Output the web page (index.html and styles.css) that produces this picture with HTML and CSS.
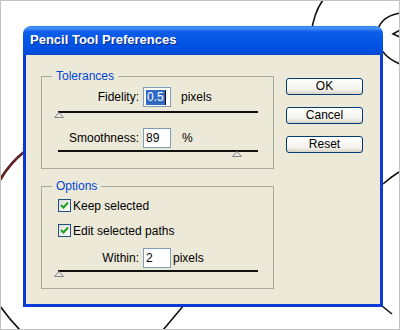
FILE: index.html
```html
<!DOCTYPE html>
<html>
  <head>
    <title>Pencil Tool Preferences</title>
    <link rel="stylesheet" href="styles.css">
  </head>
  <body>
    <div class="desktop">
      <svg class="doodles" width="398" height="328" viewBox="1 1 398 328">
        <path d="M311 34 Q314 12 323 0" />
        <path d="M400 13 Q378 17 377 35 Q378 55 400 64" />
        <path d="M400 30 L393 34 L400 37" />
        <path d="M383 184 Q391 177 399 172" />
        <path d="M382 306 L392 314" />
        <path d="M184 305 Q174 317 163 330" />
        <path d="M0 306 Q10 320 20 330" />
        <path class="red-edge" d="M0 180 Q10 163 24 152" />
        <path class="red" d="M0 180 Q10 163 24 152" />
      </svg>

      <div class="window">
        <div class="titlebar">Pencil Tool Preferences</div>
        <div class="client">
          <div class="groups">
            <fieldset class="group tolerances">
              <legend>Tolerances</legend>
              <div class="row first">
                <span class="label">Fidelity:</span>
                <span class="field"><span class="sel">0.5</span><span class="caret"></span></span>
                <span class="unit wide">pixels</span>
              </div>
              <div class="slider gap4">
                <span class="thumb" style="left: 0%"><svg width="10" height="6"><path d="M5 0.5 L9.5 5.5 L0.5 5.5 Z" /></svg></span>
              </div>
              <div class="row second">
                <span class="label">Smoothness:</span>
                <span class="field">89</span>
                <span class="unit wider">%</span>
              </div>
              <div class="slider gap2">
                <span class="thumb" style="left: 89%"><svg width="10" height="6"><path d="M5 0.5 L9.5 5.5 L0.5 5.5 Z" /></svg></span>
              </div>
            </fieldset>

            <fieldset class="group options">
              <legend>Options</legend>
              <div class="check first-check">
                <span class="box"><svg width="11" height="11"><path d="M2 5 L4.5 7.5 L9 2.5" /></svg></span>
                Keep selected
              </div>
              <div class="check">
                <span class="box"><svg width="11" height="11"><path d="M2 5 L4.5 7.5 L9 2.5" /></svg></span>
                Edit selected paths
              </div>
              <div class="row within">
                <span class="label">Within:</span>
                <span class="field">2</span>
                <span class="unit">pixels</span>
              </div>
              <div class="slider gap2">
                <span class="thumb" style="left: 0%"><svg width="10" height="6"><path d="M5 0.5 L9.5 5.5 L0.5 5.5 Z" /></svg></span>
              </div>
            </fieldset>
          </div>

          <div class="buttons">
            <button>OK</button>
            <button>Cancel</button>
            <button>Reset</button>
          </div>
        </div>
      </div>
    </div>
  </body>
</html>
```

FILE: styles.css
```css
body {
  margin: 0;
  font-family: "Liberation Sans", Arial, sans-serif;
  font-size: 12px;
  color: #000;
}
.desktop {
  position: relative;
  width: 400px;
  height: 330px;
  box-sizing: border-box;
  border: 1px solid #c3c3c3;
  background: #fff;
  overflow: hidden;
}
.doodles {
  position: absolute;
  left: 0;
  top: 0;
}
.doodles path {
  fill: none;
  stroke: #111;
  stroke-width: 1.6;
}
.doodles .red-edge {
  stroke: #222;
  stroke-width: 2.6;
}
.doodles .red {
  stroke: #d01010;
  stroke-width: 1;
}

/* the dialog */
.window {
  position: absolute;
  left: 22px;
  top: 25px;
  width: 360px;
  height: 281px;
  display: flex;
  flex-direction: column;
}
.titlebar {
  height: 29px;
  box-sizing: border-box;
  padding: 6px 0 0 7px;
  border-radius: 8px 8px 0 0;
  background: linear-gradient(#2b78f2 0%, #4a94fb 7%, #0d5de8 20%, #0355e6 55%, #0050e0 85%, #0a47cf 100%);
  color: #fff;
  font-size: 13px;
  font-weight: bold;
  line-height: 16px;
  text-shadow: 1px 1px 0 #0b2a8c;
}
.client {
  flex: 1;
  display: flex;
  align-items: flex-start;
  padding: 14px 0 0 15px;
  background: #ece9d8;
  border: 3px solid #0b3ad8;
  border-top: none;
}

/* group boxes */
.groups {
  width: 233px;
}
.group {
  margin: 0;
  padding: 0 0 16px 0;
  border: 1px solid #aaa89c;
  min-width: 0;
}
.group legend {
  margin-left: 10px;
  padding: 0 4px;
  line-height: 14px;
  color: #0046d5;
}
.options {
  margin-top: 10px;
}

.row {
  display: flex;
  align-items: center;
  height: 20px;
}
.row.first {
  margin-top: 4px;
}
.row.second {
  margin-top: 15px;
}
.row.within {
  margin-top: 11px;
}
.label {
  width: 97px;
  margin-right: 4px;
  text-align: right;
}
.field {
  display: flex;
  align-items: center;
  width: 28px;
  height: 20px;
  box-sizing: border-box;
  padding-left: 2px;
  border: 1px solid #7f9db9;
  background: #fff;
}
.sel {
  background: #316ac5;
  color: #fff;
  line-height: 15px;
  padding: 0 1px;
}
.caret {
  width: 1px;
  height: 15px;
  background: #000;
}
.unit {
  margin-left: 2px;
}
.unit.wide {
  margin-left: 10px;
}
.unit.wider {
  margin-left: 11px;
}

/* sliders */
.slider {
  position: relative;
  height: 2px;
  margin: 0 15px 0 16px;
  background: #111;
}
.slider.gap4 {
  margin-top: 4px;
}
.slider.gap2 {
  margin-top: 2px;
}
.thumb {
  position: absolute;
  top: 1px;
  margin-left: -4px;
  width: 10px;
  height: 6px;
}
.thumb svg {
  display: block;
}
.thumb path {
  fill: #e6e6e6;
  stroke: #858585;
}

/* checkboxes */
.check {
  display: flex;
  align-items: center;
  height: 13px;
  margin: 12px 0 0 16px;
}
.check.first-check {
  margin-top: 6px;
}
.box {
  width: 13px;
  height: 13px;
  box-sizing: border-box;
  margin-right: 2px;
  border: 1px solid #1c5180;
  background: linear-gradient(135deg, #dcdcd7, #fff);
}
.box svg {
  display: block;
}
.box path {
  fill: none;
  stroke: #21a121;
  stroke-width: 2;
}

/* buttons */
.buttons {
  display: flex;
  flex-direction: column;
  gap: 12px;
  margin: 9px 0 0 12px;
}
.buttons button {
  width: 77px;
  height: 17px;
  padding: 0;
  border: 1px solid #003c74;
  border-radius: 3px;
  background: linear-gradient(#ffffff, #f3f2ec 70%, #d8d3c7);
  font-family: "Liberation Sans", Arial, sans-serif;
  font-size: 12px;
  line-height: 15px;
  color: #000;
}
```
